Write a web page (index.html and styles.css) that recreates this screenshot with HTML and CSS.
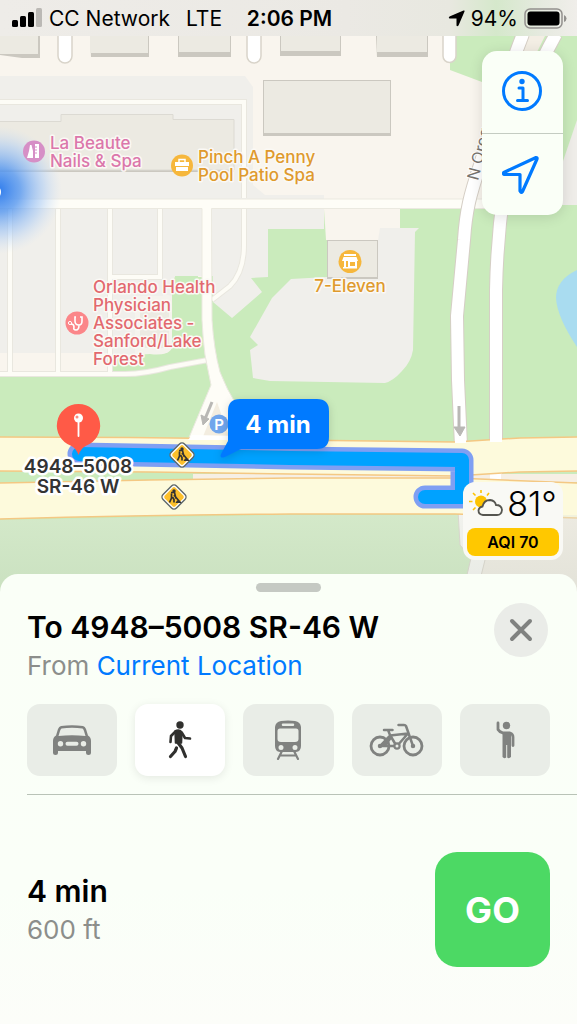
FILE: index.html
```html
<!DOCTYPE html>
<html lang="en">
<head>
  <meta charset="UTF-8">
  <meta name="viewport" content="width=device-width, initial-scale=1.0">
  <title>Directions to 4948–5008 SR-46 W</title>
  <link rel="stylesheet" href="styles.css">
</head>
<body>
  <main class="map-area">
    <svg class="map" viewBox="0 0 577 600" preserveAspectRatio="xMidYMin slice" role="img" aria-label="Map">
      <defs>
        <radialGradient id="glow">
          <stop offset="0" stop-color="#2f7cec"/>
          <stop offset="0.35" stop-color="#5597f0" stop-opacity="0.8"/>
          <stop offset="0.7" stop-color="#9fc5f7" stop-opacity="0.5"/>
          <stop offset="1" stop-color="#c9def8" stop-opacity="0"/>
        </radialGradient>
        <linearGradient id="shade" x1="0" y1="0" x2="0" y2="1">
          <stop offset="0" stop-color="#e2e6dd" stop-opacity="0.4"/>
          <stop offset="1" stop-color="#c8d0c4" stop-opacity="0.4"/>
        </linearGradient>
        <g id="works">
          <rect x="-9.500" y="-9.500" width="19" height="19" rx="3.500" transform="rotate(45)" fill="#fff" stroke="#5d676a" stroke-width="1.400"/>
          <rect x="-7.500" y="-7.500" width="15" height="15" rx="2" transform="rotate(45)" fill="#fdc02c"/>
          <circle cx="0" cy="-6" r="1.700" fill="#333"/>
          <path d="M-3 -4.500H0.500L2 1.500M-2.500 -3.500V1L-4.500 5.500M-1.500 0L0 2.500V5.500M0 -2L5 4" fill="none" stroke="#333" stroke-width="1.700"/>
          <path d="M1.500 6L3 3.500L6 3.500L7.500 6Z" fill="#333"/>
        </g>
      </defs>

      <!-- ground -->
      <rect width="577" height="600" fill="#f9f5ee"/>
      <path fill="#caebbc" d="M450 0H577V600H0V372H108V277H205V209H482V82L450 70Z"/>
      <path fill="#f0efeb" d="M0 76H245L253 87V185L265 195H324V229H268V277L251 278L262 292L232 318L213 302V276H175L172 290V353H0Z"/>
      <path fill="#f9f5ee" d="M0 353H108V372H0Z"/>
      <path fill="#f5f3ed" d="M135 296Q152 290 172 296V350Q165 356 150 354L113 356V296Z"/>
      <path fill="#caebbc" d="M175 276H198L203 362Q180 364 160 371H114V356H150Q168 356 172 348Z"/>
      <path fill="#f0efeb" d="M113 276H163V296H135V356H113Z"/>
      <rect x="140" y="311" width="29" height="37" fill="#eceae2"/>
      <path fill="#f9f5ee" d="M324 209H400V240H326Z"/>
      <path fill="#f0efeb" d="M380 228H419L415 232L413 350Q411 362 402 371Q393 381 385 383L270 381L253 378L250 350L258 345L250 337L272 298L291 279L327 277V240H378Z"/>
      <path fill="#efede9" d="M577 120L560 170V205H577Z"/>
      <path fill="#f3eee4" d="M529 36H545L537 52H520Z"/>
      <path fill="#a9dcf0" d="M577 270Q556 280 556 298Q557 317 577 347Z"/>

      <!-- buildings -->
      <g fill="#cbc8c0">
        <path d="M0 36H40V58H22L0 55Z"/>
        <path d="M90 36H149V57H91Z"/>
        <path d="M178 36H231V57H178Z"/>
        <path d="M280 36H341V56H280Z"/>
        <path d="M376 36H428V57H377Z"/>
        <path d="M263 80H391V136H263Z"/>
        <path d="M327 240H378V279H327Z"/>
        <path d="M0 121H234V172H0Z"/>
      </g>
      <g fill="#eceae2">
        <path d="M0 36H38V54H0Z"/>
        <path d="M90 36H148V53H90Z"/>
        <path d="M179 36H230V52H179Z"/>
        <path d="M281 36H340V51H281Z"/>
        <path d="M377 36H427V52H377Z"/>
        <path d="M264 81H390V133H264Z"/>
        <path d="M328 241H377V277H328Z"/>
        <path stroke="#dcdad3" d="M-1 121.500H61V114.500H173V119.500H234V170H-1Z"/>
      </g>

      <!-- lanes -->
      <g fill="none" stroke="#e9e7df" stroke-width="6">
        <path d="M0 102H244V198M10 208V372M58 208V372M110 208V372M160 208V277H111M244 208V245Q244 272 230 286L212 300"/>
        <path d="M0 374H125Q145 374 170 367L208 360" />
      </g>
      <g fill="none" stroke="#fdfcf6" stroke-width="4">
        <path d="M0 102H244V198M10 204V374M58 204V374M110 204V374M160 204V277H111M244 204V245Q244 272 230 286L212 300"/>
        <path d="M0 374H125Q145 374 170 367L208 360"/>
      </g>
      <path fill="#fefdf7" stroke="#ebe9e0" d="M-1 199H490V208.500H211.500L212 320Q214 350 220 372Q227 390 236 404L244 440H188L211 385L205 355Q203 340 202 320V208.500H-1Z"/>
      <path fill="#f3ede0" d="M217 402L202 439H230Z"/>
      <g fill="#fff" stroke="#d9d4ca" stroke-width="1.500">
        <path d="M58 30H72V56A7 7 0 0 1 58 56Z"/>
        <path d="M247 30H261V56A7 7 0 0 1 247 56Z"/>
        <path d="M443 30H456V56A6.500 6.500 0 0 1 443 56Z"/>
      </g>
      <g fill="none" stroke="#d5cec5" stroke-width="14">
        <path d="M523 34C505 80 490 130 480 165C470 195 466 210 464 240L457 316L458 380L461 446"/>
        <path d="M556 34C530 80 512 130 504 190Q497 240 496 290V484"/>
      </g>
      <g fill="none" stroke="#fff" stroke-width="12">
        <path d="M523 34C505 80 490 130 480 165C470 195 466 210 464 240L457 316L458 380L461 446"/>
        <path d="M556 34C530 80 512 130 504 190Q497 240 496 290V484"/>
      </g>
      <path fill="#f3ede4" d="M470 510H577V600H480Z"/>
      <path fill="#fbfaf8" stroke="#d5cec5" d="M458 510H474L486 556L475 600H461L471 558L460 545Z"/>

      <!-- highway -->
      <path fill="#f6efe4" d="M193 474H577V482H193Z"/>
      <path fill="#fff" d="M490 470H501V484H490Z"/>
      <g fill="#fdfadc" stroke="#f4c883" stroke-width="1.500">
        <path d="M-2 437Q150 437 290 440L455 442L520 438L579 437V471L520 472L455 476L290 474L150 472L-2 471Z"/>
        <path d="M-2 483L150 480L290 478H455L579 483V518L455 514L290 514Q150 515 -2 519Z"/>
      </g>
      <path fill="#fff" d="M188 440L192 435L242 436V440ZM455 438H466V443H455ZM490 435H502V442H490Z"/>

      <path d="M0 520L290 515H577V600H0Z" fill="url(#shade)"/>
      <circle cx="-2" cy="190" r="64" fill="url(#glow)"/>
      <circle cx="-6" cy="192" r="7" fill="#fff"/>

      <!-- one-way arrows -->
      <g fill="#b9b8b5" stroke="#b9b8b5">
        <path d="M212 402L205 419" stroke-width="3"/>
        <path d="M201 415L209 419L203 425Z"/>
        <path d="M459 406V429" stroke-width="3"/>
        <path d="M454 427H465L460 436Z"/>
      </g>
      <text class="road-name" transform="translate(478 181) rotate(-76)">N Oregon</text>

      <!-- route -->
      <g fill="none" stroke-linecap="round" stroke-linejoin="round">
        <path d="M79 454L290 458L462 460V497H425" stroke="#7f9ff3" stroke-width="23"/>
        <path d="M79 454L290 458L462 460V497H425" stroke="#00a2ff" stroke-width="14"/>
      </g>
      <circle cx="219" cy="424" r="9.500" fill="#70a5ec"/>
      <text class="parking" x="219" y="430">P</text>
      <use href="#works" x="182" y="455"/>
      <use href="#works" x="174" y="497"/>
      <path class="callout" d="M240 399H317Q329 399 329 411V437Q329 449 317 449H241L225 457Q219 459 221 454L228 441V411Q228 399 240 399Z"/>
      <text class="callout-text" x="278" y="433">4 min</text>
      <path fill="#ff5a47" d="M78.500 404A21.500 21.500 0 0 1 86 445.700Q81 448 78.500 455Q76 448 71 445.700A21.500 21.500 0 0 1 78.500 404Z"/>
      <path d="M78.500 420V436" stroke="#fff" stroke-width="1.800" stroke-linecap="round"/>
      <circle cx="78.500" cy="418" r="4.500" fill="#fff"/>
      <circle cx="77" cy="417" r="1.500" fill="#ff8b7d"/>

      <!-- places -->
      <circle cx="34" cy="151.500" r="11" fill="#d68fc6"/>
      <path fill="#fff" d="M27 158L29 151L30 145H31.500L33 151V158ZM35 144H39V158H35Z"/>
      <path d="M35 147H37M35 150H37M35 153H37" stroke="#d68fc6"/>
      <circle cx="182" cy="165.500" r="11" fill="#f6b73c"/>
      <path fill="#fff" d="M175 162H189V166H175ZM176 167H188V171H176Z"/>
      <path d="M179 162V159.500H185V162" fill="none" stroke="#fff" stroke-width="1.500"/>
      <circle cx="350" cy="261.500" r="11.500" fill="#f6b73c"/>
      <path fill="#fff" d="M344 254H356V256H344ZM343.500 257H356.500L358 261H342ZM344 261H346V267H344ZM348 261H357V268H348ZM343 267H357V268.500H343Z"/>
      <path fill="#f6b73c" d="M350 262H355V266H350Z"/>
      <circle cx="77" cy="323" r="11.500" fill="#fb8689"/>
      <path d="M76 317H75V321Q75 325 79 325Q82 325 82 321V317H80M79 325Q79 330 76 330Q73 330 74 327Q74 324 71 324" fill="none" stroke="#fff" stroke-width="1.600"/>
      <circle cx="70" cy="323" r="1.600" fill="none" stroke="#fff"/>

      <g class="place beauty">
        <text x="50" y="149">La Beaute</text>
        <text x="50" y="167">Nails &amp; Spa</text>
      </g>
      <g class="place shop">
        <text x="198" y="163">Pinch A Penny</text>
        <text x="198" y="181">Pool Patio Spa</text>
        <text x="350" y="292" text-anchor="middle">7-Eleven</text>
      </g>
      <g class="place health">
        <text x="93" y="293">Orlando Health</text>
        <text x="93" y="311">Physician</text>
        <text x="93" y="329">Associates -</text>
        <text x="93" y="347">Sanford/Lake</text>
        <text x="93" y="365">Forest</text>
      </g>
      <g class="destination">
        <text x="78" y="473">4948–5008</text>
        <text x="78" y="493">SR-46 W</text>
      </g>
    </svg>

    <header class="status-bar">
      <div class="status-side">
        <svg class="signal" width="31" height="20" viewBox="0 0 31 20" aria-hidden="true">
          <rect x="0" y="12" width="6" height="7" rx="1.500"/>
          <rect x="8" y="8" width="6" height="11" rx="1.500"/>
          <rect x="16" y="4" width="6" height="15" rx="1.500"/>
          <rect x="24" y="0" width="6" height="19" rx="1.500" fill="#bbb9b5"/>
        </svg>
        <span>CC Network</span>
        <span class="network">LTE</span>
      </div>
      <time class="clock">2:06 PM</time>
      <div class="status-side status-right">
        <svg width="17" height="17" viewBox="0 0 17 17" aria-hidden="true"><path d="M15.500 0.500Q17 0 16.500 1.500L10.500 15.500Q9 17 8.500 15.500V8.500H1.500Q0 8 1.500 6.500Z"/></svg>
        <span>94%</span>
        <svg width="43" height="21" viewBox="0 0 43 21" aria-hidden="true">
          <rect x="1" y="1" width="37" height="19" rx="5" fill="none" stroke="#92908d" stroke-width="1.500"/>
          <rect x="3.500" y="3.500" width="32" height="14" rx="3"/>
          <path d="M40 7Q42.500 8 42.500 10.500Q42.500 13 40 14Z" fill="#92908d"/>
        </svg>
      </div>
    </header>

    <div class="overlays">
      <div class="map-controls">
        <button type="button" aria-label="Map information">
          <svg width="42" height="42" viewBox="0 0 42 42" fill="none" stroke="#007aff" stroke-width="3">
            <circle cx="20" cy="20" r="18.500"/>
            <circle cx="20" cy="10.500" r="2.700" fill="#007aff" stroke="none"/>
            <path d="M17 17H21V29M15.500 29.500H25.500" stroke-linecap="round" stroke-linejoin="round"/>
          </svg>
        </button>
        <button type="button" aria-label="Track my location">
          <svg width="42" height="42" viewBox="0 0 42 42" fill="none" stroke="#007aff" stroke-width="3.200" stroke-linejoin="round">
            <path d="M34 3.500L1.800 18.500Q0.800 20 2.300 20.500H18V37Q19 39.500 20.500 37.500L35 5Q35.500 3.500 34 3.500Z"/>
          </svg>
        </button>
      </div>

      <div class="weather">
        <div class="weather-now">
          <svg width="34" height="28" viewBox="0 0 34 28" aria-hidden="true">
            <path d="M12 1V4M4 4L6.500 6.500M0 12.500H3.500M20 4L18 6.500M4 21L6.500 18.500" stroke="#fdc300" stroke-width="1.600"/>
            <circle cx="12" cy="12.500" r="6" fill="#fdc300"/>
            <path d="M14 26Q9.500 25.500 9.500 21.500Q10 18 13.500 17.500Q15 11 21 11Q26 11.500 27 16Q32.500 16 33 21Q32.500 26 28 26Z" fill="#f9f9f4" stroke="#55554f" stroke-width="1.800"/>
          </svg>
          <span class="temperature">81°</span>
        </div>
        <div class="aqi">AQI 70</div>
      </div>
    </div>
  </main>

  <section class="sheet">
    <div class="handle"></div>
    <div class="sheet-header">
      <div class="heading">
        <h1>To 4948–5008 SR-46 W</h1>
        <p>From <a href="#">Current Location</a></p>
      </div>
      <button class="close" type="button" aria-label="Close">
        <svg width="24" height="24" viewBox="0 0 24 24" stroke="#808280" stroke-width="4" stroke-linecap="round"><path d="M3 3L21 21M21 3L3 21"/></svg>
      </button>
    </div>

    <div class="modes">
      <button type="button" aria-label="Drive">
        <svg width="40" height="32" viewBox="0 0 40 32" fill="#808280">
          <path fill-rule="evenodd" d="M9 2Q20 0.500 31 2Q33 2.500 34 5L36 11.500Q39 13 39 17V28.500Q39 31 36.500 31Q34 31 34 28.500V27H6V28.500Q6 31 3.500 31Q1 31 1 28.500V17Q1 13 4 11.500L6 5Q7 2.500 9 2ZM9.500 4.500Q8.500 5 8 7L6.500 12Q20 10.500 33.500 12L32 7Q31.500 5 30.500 4.500Q20 3 9.500 4.500ZM8.500 17A2.700 2.700 0 1 0 8.500 22.400A2.700 2.700 0 1 0 8.500 17ZM31.500 17A2.700 2.700 0 1 0 31.500 22.400A2.700 2.700 0 1 0 31.500 17ZM15.500 17.700A2 2 0 0 0 15.500 21.700H24.500A2 2 0 0 0 24.500 17.700Z"/>
        </svg>
      </button>
      <button class="selected" type="button" aria-label="Walk" aria-pressed="true">
        <svg width="24" height="38" viewBox="0 0 24 38" fill="#30302e">
          <circle cx="12" cy="4" r="3.700"/>
          <path d="M7 10Q11 7.500 14 11L13.500 22H7.500Z" stroke="#30302e" stroke-width="1.500" stroke-linejoin="round"/>
          <path d="M7 11L3 15L2.500 21M14 12L17 17L22 17.500" fill="none" stroke="#30302e" stroke-width="2.600" stroke-linecap="round" stroke-linejoin="round"/>
          <path d="M9.500 21L14 27L17.500 35.500M8.500 27L7 30.500L2.500 35.500" fill="none" stroke="#30302e" stroke-width="3.200" stroke-linecap="round" stroke-linejoin="round"/>
        </svg>
      </button>
      <button type="button" aria-label="Transit">
        <svg width="28" height="40" viewBox="0 0 28 40" fill="#808280">
          <path fill-rule="evenodd" d="M7 1Q14 0 21 1Q26.500 2 27 7V26Q27 31.500 22 32H6Q1 31.500 1 26V7Q1.500 2 7 1ZM9 3.500A1.200 1.200 0 0 0 9 6H19A1.200 1.200 0 0 0 19 3.500ZM6 8.500Q3.500 8.500 3.500 11V19Q3.500 22 7 22H21Q24.500 22 24.500 19V11Q24.500 8.500 22 8.500ZM7 25A2.500 2.500 0 1 0 7 30A2.500 2.500 0 1 0 7 25ZM21 25A2.500 2.500 0 1 0 21 30A2.500 2.500 0 1 0 21 25Z"/>
          <path d="M7.500 32L4 39M20.500 32L24 39M6 35.500H22" fill="none" stroke="#808280" stroke-width="2.200" stroke-linecap="round"/>
        </svg>
      </button>
      <button type="button" aria-label="Cycle">
        <svg width="56" height="36" viewBox="0 0 56 36" fill="none" stroke="#808280" stroke-width="2.500" stroke-linecap="round" stroke-linejoin="round">
          <circle cx="11" cy="24" r="9" stroke-width="2.800"/>
          <circle cx="44" cy="24" r="9" stroke-width="2.800"/>
          <path d="M44 24L37 4Q36.500 3 35 3H29.500M15 8H23.500M19 8L21 13L27.500 24M11 24L21 13.500L39 11.500L28 24H11"/>
          <path d="M11 24L21 14L22.500 17L17 24Z" fill="#808280" stroke="none"/>
          <circle cx="28" cy="24" r="2.600" fill="#e9ede7" stroke-width="2.200"/>
          <circle cx="11" cy="24" r="1"/>
          <circle cx="44" cy="24" r="1"/>
        </svg>
      </button>
      <button type="button" aria-label="Ride share">
        <svg width="20" height="38" viewBox="0 0 20 38" fill="#808280">
          <circle cx="11.500" cy="4.500" r="3.700"/>
          <path d="M3 2V8.500Q4 10.500 8 12H15Q18 13 18 16V24.500" fill="none" stroke="#808280" stroke-width="2.800" stroke-linecap="round" stroke-linejoin="round"/>
          <path d="M7.500 11H16V36Q14 38 12.200 36.500V24H11.200V36.500Q9 38 7.500 36Z"/>
        </svg>
      </button>
    </div>

    <div class="route">
      <div>
        <h2>4 min</h2>
        <p>600 ft</p>
      </div>
      <button class="go" type="button">GO</button>
    </div>
  </section>
</body>
</html>
```

FILE: styles.css
```css
* {
  box-sizing: border-box;
}
body {
  margin: 0;
  min-height: 100vh;
  display: flex;
  flex-direction: column;
  font-family: Inter, Roboto, sans-serif;
  color: #000;
  background: #fafff7;
}
h1, h2, p {
  margin: 0;
}
button {
  border: none;
  padding: 0;
  font-family: inherit;
  cursor: pointer;
  display: flex;
  align-items: center;
  justify-content: center;
}

/* map */
.map-area {
  position: relative;
  flex: 1;
  min-height: 540px;
  display: flex;
  flex-direction: column;
}
.map {
  position: absolute;
  top: 0;
  left: 0;
  width: 100%;
  height: calc(100% + 26px);
}
.map text {
  font-family: Inter, Roboto, sans-serif;
}
.place text {
  font-size: 17px;
  font-weight: 500;
  stroke: #fbf9f5;
  stroke-width: 3px;
  stroke-linejoin: round;
  paint-order: stroke;
}
.beauty {
  fill: #db77ab;
}
.shop {
  fill: #df9a2d;
}
.health {
  fill: #e2696f;
}
.destination text {
  font-size: 19px;
  font-weight: 600;
  text-anchor: middle;
  fill: #333;
  stroke: #fff;
  stroke-width: 5px;
  stroke-linejoin: round;
  paint-order: stroke;
}
.road-name {
  font-size: 16px;
  fill: #77736e;
  stroke: #fff;
  stroke-width: 2px;
  paint-order: stroke;
}
.parking {
  font-size: 15px;
  font-weight: 600;
  text-anchor: middle;
  fill: #fff;
}
.callout {
  fill: #007aff;
  filter: drop-shadow(0 2px 4px rgba(0, 0, 0, 0.15));
}
.callout-text {
  font-size: 24px;
  font-weight: 700;
  text-anchor: middle;
  fill: #fff;
}

/* status bar */
.status-bar {
  position: relative;
  height: 36px;
  padding: 0 10px 0 12px;
  display: grid;
  grid-template-columns: 1fr auto 1fr;
  align-items: center;
  font-size: 21px;
  background: linear-gradient(to right, #eeece8, #ebe9e4 60%, #e8e8e0 78%, #d5e8cb 86%, #e6eae0 94%, #f0eeea);
}
.status-side {
  display: flex;
  align-items: center;
  gap: 6px;
}
.network {
  margin-left: 10px;
}
.status-right {
  justify-content: flex-end;
}
.clock {
  font-weight: 600;
}

/* floating controls */
.overlays {
  position: relative;
  flex: 1;
  padding: 15px 14px 14px;
  display: flex;
  flex-direction: column;
  align-items: flex-end;
  justify-content: space-between;
}
.map-controls {
  width: 81px;
  border-radius: 15px;
  overflow: hidden;
  background: #fafff7;
  box-shadow: 0 2px 14px rgba(0, 0, 0, 0.12);
}
.map-controls button {
  width: 100%;
  height: 82px;
  background: transparent;
}
.map-controls button + button {
  border-top: 1px solid #c4ccc2;
}
.weather {
  width: 100px;
  padding: 4px;
  border-radius: 12px;
  background: #f9f9f5;
}
.weather-now {
  height: 42px;
  padding-bottom: 8px;
  display: flex;
  align-items: center;
  justify-content: center;
  gap: 4px;
}
.temperature {
  font-size: 34px;
  font-weight: 300;
}
.aqi {
  height: 28px;
  line-height: 28px;
  border-radius: 8px;
  text-align: center;
  font-size: 16px;
  font-weight: 600;
  background: #ffc800;
}

/* bottom sheet */
.sheet {
  position: relative;
  padding-top: 9px;
  border-radius: 18px 18px 0 0;
  background: linear-gradient(to bottom, #fafff7, #fafff8 70%, #fcfdf9);
}
.handle {
  width: 65px;
  height: 9px;
  margin: 0 auto 11px;
  border-radius: 5px;
  background: #c5c9c3;
}
.sheet-header {
  padding: 0 29px 0 27px;
  display: flex;
  justify-content: space-between;
  align-items: flex-start;
}
.heading {
  padding-top: 4px;
}
h1 {
  font-size: 30px;
  font-weight: 600;
  line-height: 40px;
}
.heading p {
  font-size: 26px;
  line-height: 38px;
  color: #8c8e8b;
}
.heading a {
  color: #007aff;
  text-decoration: none;
}
.close {
  flex: none;
  width: 54px;
  height: 54px;
  border-radius: 50%;
  background: #eaece8;
}
.modes {
  padding: 19px 27px 18px;
  display: grid;
  grid-template-columns: repeat(5, 1fr);
  gap: 18px;
}
.modes button {
  height: 72px;
  border-radius: 13px;
  background: #e9ede7;
}
.modes .selected {
  background: #fff;
  box-shadow: 0 2px 10px rgba(0, 0, 0, 0.09);
}
.route {
  margin-left: 27px;
  padding: 57px 27px 57px 0;
  border-top: 1px solid #b9c3b7;
  display: flex;
  justify-content: space-between;
  align-items: center;
}
h2 {
  font-size: 30px;
  font-weight: 600;
  line-height: 40px;
}
.route p {
  font-size: 26px;
  line-height: 38px;
  color: #8c8e8b;
}
.go {
  width: 115px;
  height: 115px;
  border-radius: 22px;
  font-size: 36px;
  font-weight: 700;
  color: #fff;
  background: #4cd964;
}
```
